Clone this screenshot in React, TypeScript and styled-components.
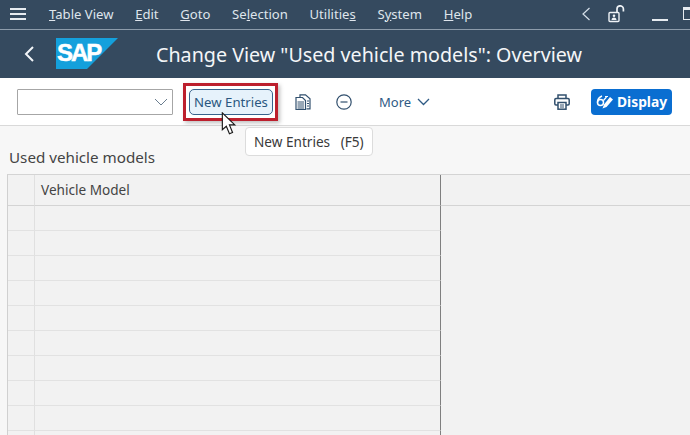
import { createGlobalStyle, styled } from "styled-components";

const GlobalStyle = createGlobalStyle`
  html, body {
    margin: 0;
    padding: 0;
    background: #f7f7f7;
  }
  * {
    box-sizing: border-box;
  }
`;

const menuItems: { before: string; key: string; after: string }[] = [
  { before: "", key: "T", after: "able View" },
  { before: "", key: "E", after: "dit" },
  { before: "", key: "G", after: "oto" },
  { before: "Se", key: "l", after: "ection" },
  { before: "Utilitie", key: "s", after: "" },
  { before: "S", key: "y", after: "stem" },
  { before: "", key: "H", after: "elp" },
];

const rowCount = 10;

export default function App() {
  return (
    <Page>
      <GlobalStyle />
      <MenuBar>
        <Burger>
          <span />
          <span />
          <span />
        </Burger>
        <MenuList>
          {menuItems.map((item) => (
            <MenuItem key={item.before + item.key}>
              {item.before}
              <u>{item.key}</u>
              {item.after}
            </MenuItem>
          ))}
        </MenuList>
        <WindowControls>
          <svg width="12" height="16" viewBox="0 0 12 16" fill="none" stroke="#d5dfe9" strokeWidth="1.2">
            <path d="M9.5 2 3 8l6.5 6" />
          </svg>
          <svg width="18" height="18" viewBox="0 0 18 18" fill="none" stroke="#eef2f6" strokeWidth="1.4">
            <rect x="1" y="7.5" width="10" height="9" rx="1" />
            <path d="M9 7V4a3.2 3.2 0 0 1 6.4 0v2.5" strokeWidth="1.7" />
            <circle cx="6" cy="10.8" r="1.3" fill="#eef2f6" stroke="none" />
            <path d="M3.5 15c.3-2 1.2-2.6 2.5-2.6s2.2.6 2.5 2.6z" fill="#eef2f6" stroke="none" />
          </svg>
          <Minimize />
          <Maximize />
        </WindowControls>
      </MenuBar>

      <TitleBar>
        <BackButton>
          <svg width="12" height="18" viewBox="0 0 12 18" fill="none" stroke="#f2f5f8" strokeWidth="2">
            <path d="M10 2 3 9l7 7" />
          </svg>
        </BackButton>
        <Logo width="62" height="31" viewBox="0 0 62 31">
          <polygon points="0,0 62,0 31,31 0,31" fill="#14a0dc" />
          <text
            x="1"
            y="23"
            fontFamily="Liberation Sans, sans-serif"
            fontWeight="700"
            fontSize="24"
            letterSpacing="-2"
            fill="#ffffff"
            stroke="#ffffff"
            strokeWidth="0.5"
          >
            SAP
          </text>
        </Logo>
        <Title>Change View "Used vehicle models": Overview</Title>
      </TitleBar>

      <Toolbar>
        <ComboBox>
          <svg width="14" height="8" viewBox="0 0 14 8" fill="none" stroke="#6a7d8f" strokeWidth="1">
            <path d="M1 1l6 6 6-6" />
          </svg>
        </ComboBox>
        <Highlight>
          <NewEntriesButton>New Entries</NewEntriesButton>
        </Highlight>
        <IconButton $gap={17}>
          <svg width="16" height="16" viewBox="0 0 16 16" fill="none" stroke="#32506e" strokeWidth="1.2">
            <path d="M5 3V.8h5.5l4.500 4v10h-3.500" />
            <path d="M1 3.500h6.500l3 3v9H1z" fill="#ffffff" />
            <path d="M2.500 8h6.500M2.500 10h6.500M2.500 12h6.500M2.500 14h6.500M12 7h2M12 9.500h2M12 12h2" />
          </svg>
        </IconButton>
        <IconButton $gap={25}>
          <svg width="16" height="16" viewBox="0 0 16 16" fill="none" stroke="#32506e" strokeWidth="1.2">
            <circle cx="8" cy="8" r="7.2" />
            <path d="M4.500 8h7" />
          </svg>
        </IconButton>
        <MoreButton>
          More
          <svg width="13" height="8" viewBox="0 0 13 8" fill="none" stroke="#2f5b85" strokeWidth="1.3">
            <path d="M1 1l5.500 5.500L12 1" />
          </svg>
        </MoreButton>
        <ToolbarSpacer />
        <svg width="16" height="16" viewBox="0 0 16 16" fill="none" stroke="#32506e" strokeWidth="1.5">
          <path d="M4 4.500V1h8v3.500" />
          <rect x=".8" y="4.500" width="14.400" height="6.500" rx="1.2" />
          <rect x="4" y="8.500" width="8" height="6.700" fill="#ffffff" />
          <path d="M6 11h4M6 13h4" strokeWidth="1" />
        </svg>
        <DisplayButton>
          <svg width="18" height="16" viewBox="0 0 18 16" fill="none" stroke="#ffffff" strokeWidth="1.5">
            <circle cx="4.500" cy="8.500" r="3" />
            <path d="M1.500 8.500C1.500 5 3.500 3 6 2" />
            <path d="M6.500 14.500 8 10.500l6-7.500 3 2.500-6.500 7.500z" fill="#ffffff" stroke="none" />
            <path d="M9 2.500h3M7.500 6.500l3-3.500" strokeWidth="1.2" />
          </svg>
          Display
        </DisplayButton>
      </Toolbar>

      <Content>
        <Tooltip>New Entries&nbsp;&nbsp; (F5)</Tooltip>
        <Cursor width="16" height="24" viewBox="0 0 18 27">
          <path
            d="M1.500 1v19l4.500-4 3.500 8.500 3.500-1.500-3.500-8.500h6z"
            fill="#ffffff"
            stroke="#1a1a1a"
            strokeWidth="1.3"
          />
        </Cursor>
        <TableTitle>Used vehicle models</TableTitle>
        <Table>
          <HeaderRow>
            <SelectorCell $line="#d4d4d4" />
            <ColumnCell $line="#d4d4d4">Vehicle Model</ColumnCell>
            <RestCell $line="#d4d4d4" />
          </HeaderRow>
          {Array.from({ length: rowCount }, (_, index) => (
            <BodyRow key={index}>
              <SelectorCell $line="#e2e2e2" />
              <ColumnCell $line="#e2e2e2" />
              <RestCell />
            </BodyRow>
          ))}
        </Table>
      </Content>
    </Page>
  );
}

const Page = styled.div`
  width: 690px;
  height: 435px;
  overflow: hidden;
  display: flex;
  flex-direction: column;
  font-family: "Noto Sans", "Open Sans", sans-serif;
  background: #f7f7f7;
`;

const MenuBar = styled.div`
  height: 30px;
  flex: none;
  display: flex;
  align-items: center;
  padding: 0 0 2px 10px;
  background: #354a5f;
  border-bottom: 1px solid #8d9cab;
`;

const Burger = styled.div`
  width: 16px;
  display: flex;
  flex-direction: column;
  gap: 3px;
  margin-right: 23px;

  span {
    display: block;
    height: 2px;
    background: #e6ebf0;
  }
`;

const MenuList = styled.div`
  display: flex;
  gap: 21.7px;
`;

const MenuItem = styled.span`
  font-size: 13.1px;
  color: #dfe5ec;
  white-space: nowrap;
`;

const WindowControls = styled.div`
  margin-left: auto;
  display: flex;
  align-items: center;
  gap: 16px;
  margin-right: -5px;
  padding-left: 10px;
`;

const Minimize = styled.div`
  width: 16px;
  height: 2px;
  margin: 12px 0 0 10px;
  background: #e6ebf0;
`;

const Maximize = styled.div`
  width: 12px;
  height: 13px;
  border: 1.5px solid #e6ebf0;
  border-top-width: 3px;
  border-right: 0;
  margin-left: -1px;
`;

const TitleBar = styled.div`
  height: 48px;
  flex: none;
  display: flex;
  align-items: center;
  padding-left: 23px;
  background: #354a5f;
`;

const BackButton = styled.div`
  width: 33px;
  display: flex;
`;

const Logo = styled.svg`
  flex: none;
  margin-bottom: 2px;
`;

const Title = styled.h1`
  margin: 0 0 0 38px;
  font-size: 19.7px;
  font-weight: 400;
  color: #f4f6f8;
  white-space: nowrap;
`;

const Toolbar = styled.div`
  height: 48px;
  flex: none;
  display: flex;
  align-items: center;
  padding: 0 18px 0 17px;
  background: #ffffff;
  border-bottom: 1px solid #d9d9d9;
`;

const ComboBox = styled.div`
  width: 156px;
  height: 26px;
  display: flex;
  align-items: center;
  justify-content: flex-end;
  padding-right: 4px;
  border: 1px solid #a6a6a6;
  border-radius: 1px;
`;

const Highlight = styled.div`
  margin-left: 10px;
  padding: 3px 2px 3px 3px;
  border: 3px solid #bc1f2d;
  box-shadow: 2px 2px 4px rgba(0, 0, 0, 0.25);
`;

const NewEntriesButton = styled.button`
  display: block;
  width: 84px;
  height: 26px;
  padding: 0;
  font: 13.2px "Noto Sans", "Open Sans", sans-serif;
  color: #2a5780;
  background: #e6f2fb;
  border: 1px solid #36628c;
  border-radius: 5px;
`;

const IconButton = styled.div<{ $gap: number }>`
  width: 16px;
  height: 16px;
  display: flex;
  margin-left: ${(props) => props.$gap}px;
`;

const MoreButton = styled.div`
  display: flex;
  align-items: center;
  gap: 6px;
  margin-left: 27px;
  font-size: 13px;
  color: #2f5b85;
`;

const ToolbarSpacer = styled.div`
  flex: 1;
`;

const DisplayButton = styled.button`
  display: flex;
  align-items: center;
  gap: 3px;
  height: 26px;
  width: 81px;
  margin-left: 21px;
  padding: 0 0 0 5px;
  font: 700 13.8px "Noto Sans", "Open Sans", sans-serif;
  color: #ffffff;
  background: #0a6ed1;
  border: 0;
  border-radius: 4px;
`;

const Content = styled.div`
  position: relative;
  flex: 1;
  padding: 22px 0 0 7px;
  background: #f7f7f7;
`;

const Tooltip = styled.div`
  position: absolute;
  left: 245px;
  top: 1px;
  height: 29px;
  padding: 0 8px;
  display: flex;
  align-items: center;
  font-size: 13.6px;
  color: #3a3a3a;
  white-space: pre;
  background: #ffffff;
  border: 1px solid #dcdcdc;
  border-radius: 4px;
`;

const Cursor = styled.svg`
  position: absolute;
  left: 221px;
  top: -14px;
`;

const TableTitle = styled.div`
  height: 26px;
  padding-left: 2px;
  font-size: 15.2px;
  color: #444444;
  line-height: 18px;
`;

const Table = styled.div`
  border-left: 1px solid #d0d0d0;
  border-top: 1px solid #d4d4d4;
`;

const HeaderRow = styled.div`
  height: 31px;
  display: flex;
  background: #f2f2f2;
`;

const BodyRow = styled(HeaderRow)`
  height: 25px;
`;

const SelectorCell = styled.div<{ $line: string }>`
  width: 27px;
  flex: none;
  border-right: 1px solid #e0e0e0;
  border-bottom: 1px solid ${(props) => props.$line};
`;

const ColumnCell = styled.div<{ $line: string }>`
  width: 406px;
  flex: none;
  padding-left: 6px;
  font-size: 13.6px;
  line-height: 29px;
  color: #444444;
  border-right: 1px solid #7f7f7f;
  border-bottom: 1px solid ${(props) => props.$line};
`;

const RestCell = styled.div<{ $line?: string }>`
  flex: 1;
  border-bottom: ${(props) => (props.$line ? `1px solid ${props.$line}` : "0")};
`;
